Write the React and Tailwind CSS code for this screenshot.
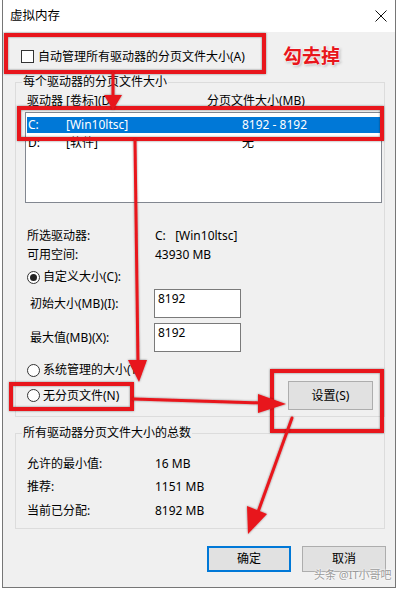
import React from 'react';

const font = { fontFamily: '"Noto Sans", "Noto Sans CJK SC", sans-serif' };

function Radio({ checked }) {
  return (
    <span className="w-[13px] h-[13px] rounded-full border border-[#333] bg-white flex items-center justify-center shrink-0">
      {checked && <span className="w-[7px] h-[7px] rounded-full bg-[#222]" />}
    </span>
  );
}

function InfoRow({ label, value, className = '' }) {
  return (
    <div className={`flex h-[16px] leading-[16px] ${className}`}>
      <span className="w-[130px] pl-[2px]">{label}</span>
      <span className="whitespace-pre">{value}</span>
    </div>
  );
}

function SizeInput({ label, value, className = '' }) {
  return (
    <div className={`flex items-center ${className}`}>
      <span className="w-[129px] pl-[5px] leading-[16px]">{label}</span>
      <div className="w-[87px] h-[29px] bg-white border border-[#7a7a7a] pl-[3px] pt-[1px] leading-[16px]">
        {value}
      </div>
    </div>
  );
}

function Annotations() {
  const red = '#e8161c';
  return (
    <svg className="absolute left-0 top-0 pointer-events-none" width="397" height="589" viewBox="0 0 397 589">
      <defs>
        <filter id="sh" x="-10%" y="-10%" width="120%" height="120%">
          <feDropShadow dx="0" dy="0" stdDeviation="1.2" floodColor="#000" floodOpacity="0.45" />
        </filter>
      </defs>
      <g filter="url(#sh)" fill="none" stroke={red} strokeWidth="4">
        <rect x="6" y="35" width="258" height="37" />
        <rect x="19" y="108" width="363" height="31" />
        <rect x="11" y="384" width="121" height="25" />
        <rect x="272" y="371" width="110" height="60" />
      </g>
      <g filter="url(#sh)" stroke={red} strokeWidth="3" fill={red} strokeLinecap="round">
        <line x1="113" y1="74" x2="113" y2="98" />
        <polygon points="104,95 122,95 113,110" stroke="none" />
        <line x1="135" y1="141" x2="138" y2="364" />
        <polygon points="128,360 147,360 139,382" stroke="none" />
        <line x1="134" y1="399" x2="262" y2="403" />
        <polygon points="258,394 286,404 258,413" stroke="none" />
        <line x1="292" y1="418" x2="258" y2="512" />
        <polygon points="247,506 267,514 248,534" stroke="none" />
      </g>
    </svg>
  );
}

export default function App() {
  return (
    <div className="relative w-[397px] h-[589px] bg-white overflow-hidden text-[12px] text-black" style={font}>
      <div className="ml-[2px] w-[394px] h-[588px] border-x border-b border-[#767676] flex flex-col">
        {/* Title bar */}
        <div className="h-[32px] bg-white flex items-center justify-between pl-[7px] pr-[7px] shrink-0">
          <span className="text-[12.5px] leading-[16px]">虚拟内存</span>
          <svg width="12" height="12" viewBox="0 0 12 12" className="mr-[1px]">
            <path d="M0.5 0.5 L11.5 11.5 M11.5 0.5 L0.5 11.5" stroke="#111" strokeWidth="1" />
          </svg>
        </div>

        {/* Body */}
        <div className="flex-1 bg-[#f0f0f0] flex flex-col pl-[12px] pr-[10px]">
          <div className="mt-[18px] ml-[6px] h-[13px] flex items-center gap-[4px]">
            <span className="w-[13px] h-[13px] border border-[#333] bg-white shrink-0" />
            <span className="leading-[16px]">自动管理所有驱动器的分页文件大小(A)</span>
          </div>

          <fieldset className="mt-[11px] border border-[#dcdcdc] pl-[9px] pr-[2px] pb-[6px]">
            <legend className="ml-[-3px] px-[1px] leading-[16px]">每个驱动器的分页文件大小</legend>
            <div className="mt-[3px] flex h-[16px] leading-[16px]">
              <span className="w-[182px] pl-[2px]">驱动器 [卷标](D)</span>
              <span>分页文件大小(MB)</span>
            </div>
            <div className="mt-[3px] h-[91px] bg-white border border-[#828790] pt-[4px] px-[1px]">
              <div className="h-[16px] leading-[16px] bg-[#0078d7] text-white flex pl-[1px]">
                <span className="w-[38px]">C:</span>
                <span className="w-[176px]">[Win10ltsc]</span>
                <span>8192 - 8192</span>
              </div>
              <div className="mt-[2px] h-[16px] leading-[16px] flex pl-[1px]">
                <span className="w-[38px]">D:</span>
                <span className="w-[176px]">[软件]</span>
                <span>无</span>
              </div>
            </div>

            <InfoRow className="mt-[25px]" label="所选驱动器:" value="C:   [Win10ltsc]" />
            <InfoRow className="mt-[3px]" label="可用空间:" value="43930 MB" />

            <div className="mt-[6px] h-[16px] flex items-center gap-[3px] pl-[2px]">
              <Radio checked />
              <span className="leading-[16px]">自定义大小(C):</span>
            </div>

            <SizeInput className="mt-[4px]" label="初始大小(MB)(I):" value="8192" />
            <SizeInput className="mt-[5px]" label="最大值(MB)(X):" value="8192" />

            <div className="mt-[10px] h-[16px] flex items-center gap-[3px] pl-[2px]">
              <Radio />
              <span className="leading-[16px]">系统管理的大小(Y)</span>
            </div>

            <div className="mt-[3px] flex items-center justify-between">
              <div className="flex items-center gap-[3px] pl-[2px]">
                <Radio />
                <span className="leading-[16px]">无分页文件(N)</span>
              </div>
              <button className="w-[85px] h-[29px] mr-[9px] bg-[#e1e1e1] border border-[#adadad] leading-[16px]">
                设置(S)
              </button>
            </div>
          </fieldset>

          <fieldset className="mt-[8px] border border-[#dcdcdc] pl-[9px] pr-[2px] pb-[9px]">
            <legend className="ml-[-3px] px-[1px] leading-[16px]">所有驱动器分页文件大小的总数</legend>
            <InfoRow className="mt-[15px]" label="允许的最小值:" value="16 MB" />
            <InfoRow className="mt-[7px]" label="推荐:" value="1151 MB" />
            <InfoRow className="mt-[8px]" label="当前已分配:" value="8192 MB" />
          </fieldset>

          <div className="mt-[17px] mr-[-1px] flex justify-end gap-[11px]">
            <button className="w-[84px] h-[26px] bg-[#e1e1e1] border-2 border-[#0078d7] leading-[16px]">确定</button>
            <button className="w-[84px] h-[26px] bg-[#e1e1e1] border border-[#adadad] leading-[16px]">取消</button>
          </div>
        </div>
      </div>

      {/* Annotations */}
      <span className="absolute left-[283px] top-[44px] text-[19px] leading-[24px] font-bold text-[#e8161c] [text-shadow:0_0_2px_#fff,0_0_2px_#fff,0_0_3px_#fff,1px_1px_3px_#888]">
        勾去掉
      </span>
      <Annotations />
      <span className="absolute left-[314px] top-[568px] text-[11px] leading-[14px] text-[#9a9a9a] [text-shadow:0_0_2px_#fff,0_0_2px_#fff]">
        头条 @IT小哥吧
      </span>
    </div>
  );
}
